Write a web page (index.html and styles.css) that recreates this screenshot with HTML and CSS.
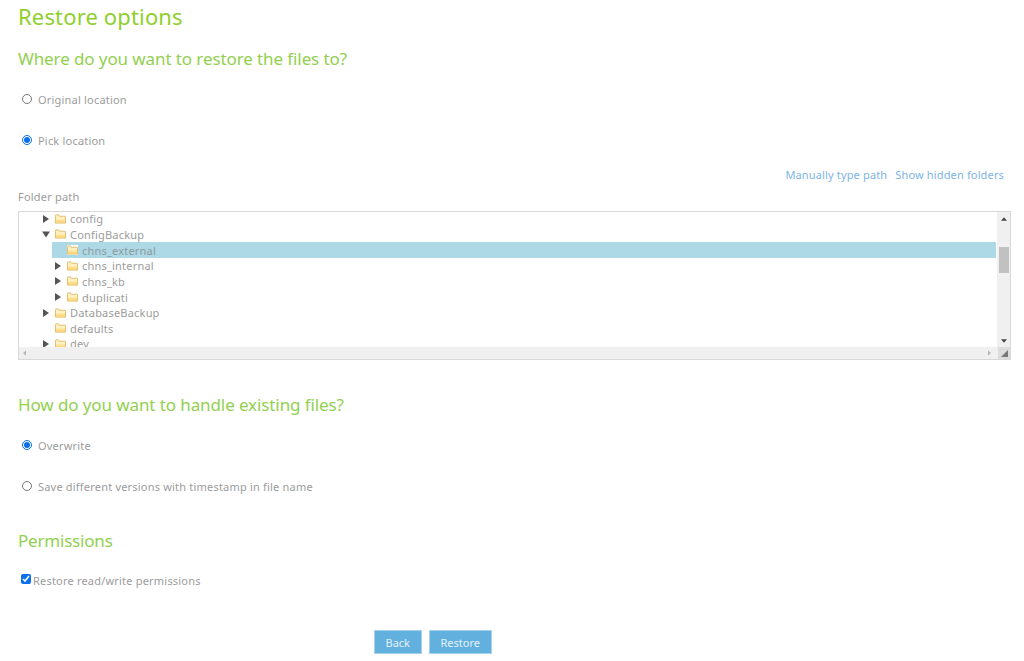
FILE: index.html
```html
<!DOCTYPE html>
<html lang="en">
<head>
<meta charset="utf-8">
<title>Restore options</title>
<link rel="stylesheet" href="styles.css">
</head>
<body>
<main class="page">
  <h1 class="title">Restore options</h1>
  <h2 class="section first">Where do you want to restore the files to?</h2>
  <div class="choice c-first"><input type="radio" name="dest" class="radio"><label>Original location</label></div>
  <div class="choice"><input type="radio" name="dest" class="radio" checked><label>Pick location</label></div>
  <div class="links"><a>Manually type path</a><a>Show hidden folders</a></div>
  <div class="folder-label">Folder path</div>
  <div class="tree-box">
    <div class="tree-main">
      <div class="tree-view">
        <div class="node l1"><svg class="arrow" viewBox="0 0 8 8"><path d="M1 0L7 4L1 8Z"/></svg><svg class="folder" viewBox="0 0 12 11"><use href="#f"/></svg><span>config</span></div>
        <div class="node l1"><svg class="arrow" viewBox="0 0 8 8"><path d="M0 1.500H8L4 7.500Z"/></svg><svg class="folder" viewBox="0 0 12 11"><use href="#f"/></svg><span>ConfigBackup</span></div>
        <div class="node l2 selected"><i class="arrow"></i><svg class="folder boxed" viewBox="0 0 12 11"><use href="#f"/></svg><span>chns_external</span></div>
        <div class="node l2"><svg class="arrow" viewBox="0 0 8 8"><path d="M1 0L7 4L1 8Z"/></svg><svg class="folder" viewBox="0 0 12 11"><use href="#f"/></svg><span>chns_internal</span></div>
        <div class="node l2"><svg class="arrow" viewBox="0 0 8 8"><path d="M1 0L7 4L1 8Z"/></svg><svg class="folder" viewBox="0 0 12 11"><use href="#f"/></svg><span>chns_kb</span></div>
        <div class="node l2"><svg class="arrow" viewBox="0 0 8 8"><path d="M1 0L7 4L1 8Z"/></svg><svg class="folder" viewBox="0 0 12 11"><use href="#f"/></svg><span>duplicati</span></div>
        <div class="node l1"><svg class="arrow" viewBox="0 0 8 8"><path d="M1 0L7 4L1 8Z"/></svg><svg class="folder" viewBox="0 0 12 11"><use href="#f"/></svg><span>DatabaseBackup</span></div>
        <div class="node l1"><i class="arrow"></i><svg class="folder" viewBox="0 0 12 11"><use href="#f"/></svg><span>defaults</span></div>
        <div class="node l1"><svg class="arrow" viewBox="0 0 8 8"><path d="M1 0L7 4L1 8Z"/></svg><svg class="folder" viewBox="0 0 12 11"><use href="#f"/></svg><span>dev</span></div>
      </div>
      <div class="vbar">
        <svg class="sb-arrow" viewBox="0 0 7 4"><path d="M0 4L3.500 0L7 4Z"/></svg>
        <div class="thumb"></div>
        <svg class="sb-arrow" viewBox="0 0 7 4"><path d="M0 0H7L3.500 4Z"/></svg>
      </div>
    </div>
    <div class="hbar">
      <svg class="h-arrow" viewBox="0 0 4 7"><path d="M4 0V7L0 3.500Z"/></svg>
      <svg class="h-arrow" viewBox="0 0 4 7"><path d="M0 0V7L4 3.500Z"/></svg>
      <div class="corner"><svg viewBox="0 0 8 8"><path d="M8 0V8H0Z"/></svg></div>
    </div>
  </div>
  <h2 class="section second">How do you want to handle existing files?</h2>
  <div class="choice c-first2"><input type="radio" name="mode" class="radio" checked><label>Overwrite</label></div>
  <div class="choice"><input type="radio" name="mode" class="radio"><label>Save different versions with timestamp in file name</label></div>
  <h2 class="section third">Permissions</h2>
  <div class="check-row"><input type="checkbox" class="check" checked><label>Restore read/write permissions</label></div>
  <div class="buttons"><button class="btn">Back</button><button class="btn">Restore</button></div>
</main>
<svg class="defs" width="0" height="0"><defs><linearGradient id="g" x1="0" y1="0" x2="0" y2="1"><stop offset="0" stop-color="#fff3c8"/><stop offset="1" stop-color="#fbd067"/></linearGradient><g id="f"><path d="M.5 2.500V1.500Q.5 1 1 1H4L5 2.500H11Q11.500 2.500 11.500 3V10H.5Z" fill="#fdf0c4" stroke="#e0b866"/><path d="M1 4.500H11V9.500H1Z" fill="url(#g)"/></g></defs></svg>
</body>
</html>
```
FILE: styles.css
```css
html, body { margin: 0; padding: 0; background: #fff; }
body { font-family: "Noto Sans", sans-serif; color: #9c9c9c; font-size: 11px; overflow: hidden; height: 661px; }
.page { padding: 0 13px 0 18px; }
.title { margin: 0; padding-top: 2px; font-size: 22px; line-height: 28px; font-weight: 400; color: #8fcf2c; letter-spacing: .15px; }
.section { margin: 0; font-size: 17px; line-height: 24px; font-weight: 400; color: #92d050; letter-spacing: -.1px; }
.section.first { padding-top: 17px; }
.section.second { padding-top: 33px; }
.section.third { padding-top: 22px; letter-spacing: -.2px; }
.choice { display: flex; align-items: center; height: 41px; padding-left: 4px; }
.c-first { margin-top: 8px; }
.c-first2 { margin-top: 8px; }
.choice label, .check-row label { letter-spacing: .2px; }
.radio { width: 10px; height: 10px; margin: 0 6px 2px 0; accent-color: #0a6fe8; }
.links { display: flex; justify-content: flex-end; gap: 8px; padding-right: 7px; margin-top: 6px; line-height: 16px; color: #7db4e4; letter-spacing: .15px; }
.folder-label { margin-top: 6px; line-height: 16px; letter-spacing: .2px; }
.tree-box { margin-top: 6px; height: 147px; border: 1px solid #d8d8d8; display: flex; flex-direction: column; }
.tree-main { display: flex; flex: 1; min-height: 0; }
.tree-view { flex: 1; overflow: hidden; margin-top: -1px; }
.node { display: flex; align-items: center; height: 15.650px; letter-spacing: .2px; }
.l1 { padding-left: 23px; }
.l2 { margin-right: 1px; padding-left: 35px; }
.arrow { width: 8px; height: 8px; margin-right: 5px; fill: #555; flex: none; display: block; }
.folder { width: 11px; height: 10px; margin-right: 4px; flex: none; }
.selected { background: #add8e6; margin-left: 33px; padding-left: 2px; color: #8d9aa0; }
.boxed { background: #fff; }
.vbar { width: 13px; background: #f0f0f0; display: flex; flex-direction: column; align-items: center; padding-top: 5px; }
.sb-arrow { width: 6px; height: 4px; fill: #444; flex: none; }
.thumb { width: 10px; height: 26px; background: #c1c1c1; margin: 26px 0 auto; }
.vbar .sb-arrow:last-child { margin-bottom: 4px; }
.hbar { display: flex; align-items: center; height: 12px; background: #f0f0f0; padding-left: 4px; }
.h-arrow { width: 3px; height: 6px; fill: #b5b5b5; flex: none; }
.h-arrow:nth-child(2) { margin-left: auto; margin-right: 7px; }
.corner { width: 12px; height: 12px; background: #dcdcdc; display: flex; align-items: center; justify-content: center; }
.corner svg { width: 7px; height: 7px; fill: #777; }
.check-row { display: flex; align-items: center; margin-top: 19px; padding-left: 3px; height: 16px; }
.check { width: 10px; height: 10px; margin: 0 2px 2px 0; accent-color: #0a6fe8; }
.buttons { display: flex; gap: 7px; margin-top: 42px; padding-left: 356px; }
.btn { height: 24px; padding: 0 11px 0 10.500px; background: #62b0de; border: 1px solid #a6d1ec; color: #e4f1f9; font: 11px "Noto Sans", sans-serif; }
.defs { position: absolute; }
```
